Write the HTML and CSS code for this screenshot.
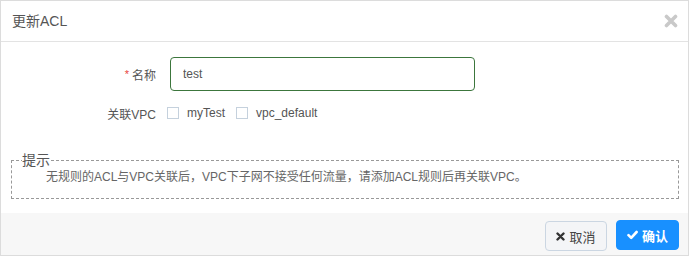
FILE: index.html
```html
<!DOCTYPE html>
<html lang="zh-CN">
<head>
<meta charset="utf-8">
<title>更新ACL</title>
<link rel="stylesheet" href="styles.css">
</head>
<body>
<div class="modal">
  <div class="modal-header">
    <span class="modal-title">更新ACL</span>
    <span class="close" aria-label="close">
      <svg width="14" height="14" viewBox="0 0 14 14"><path d="M2.5 2.5 L11.5 11.5 M11.5 2.5 L2.5 11.5" stroke="#c9c9c9" stroke-width="3.6" stroke-linecap="round" fill="none"/></svg>
    </span>
  </div>
  <div class="modal-body">
    <div class="form-row">
      <label class="form-label"><span class="req">*</span>名称</label>
      <input class="form-input" type="text" value="test">
    </div>
    <div class="form-row form-row-check">
      <label class="form-label">关联VPC</label>
      <div class="check-group">
        <span class="check-item"><span class="check-box"></span><span class="check-text">myTest</span></span>
        <span class="check-item"><span class="check-box"></span><span class="check-text">vpc_default</span></span>
      </div>
    </div>
    <fieldset class="hint">
      <legend class="hint-legend">提示</legend>
      <p class="hint-text">无规则的ACL与VPC关联后，VPC下子网不接受任何流量，请添加ACL规则后再关联VPC。</p>
    </fieldset>
  </div>
  <div class="modal-footer">
    <button class="btn btn-cancel" type="button">
      <svg width="9" height="9" viewBox="0 0 9 9"><path d="M1.5 1.5 L7.5 7.5 M7.5 1.5 L1.5 7.5" stroke="#333" stroke-width="2.4" stroke-linecap="round" fill="none"/></svg>
      取消
    </button>
    <button class="btn btn-ok" type="button">
      <svg width="11" height="10" viewBox="0 0 11 10"><path d="M1.5 5.2 L4.2 7.9 L9.6 2" stroke="#fff" stroke-width="2.6" stroke-linecap="round" stroke-linejoin="round" fill="none"/></svg>
      确认
    </button>
  </div>
</div>
</body>
</html>
```

FILE: styles.css
```css
html, body {
  margin: 0;
  padding: 0;
  background: #fff;
}

body {
  font-family: "Liberation Sans", "Noto Sans CJK SC", sans-serif;
  color: #555;
}

.modal {
  box-sizing: border-box;
  width: 689px;
  height: 256px;
  border: 1px solid #dcdcdc;
  display: flex;
  flex-direction: column;
  background: #fff;
}

.modal-header {
  border-bottom: 1px solid #e3e3e3;
  display: flex;
  align-items: center;
  justify-content: space-between;
  padding: 0 10px 2px 11px;
  box-sizing: content-box;
  height: 38px;
}

.modal-title {
  font-size: 14px;
  color: #555;
}

.close {
  display: flex;
  width: 14px;
  height: 14px;
  margin-top: 2px;
}

.modal-body {
  flex: 1;
  padding: 15px 9px 0 10px;
}

.form-row {
  display: flex;
  align-items: center;
  height: 34px;
}

.form-row-check {
  height: 20px;
  margin-top: 12px;
}

.form-label {
  width: 145px;
  margin-right: 14px;
  text-align: right;
  font-size: 12px;
  color: #555;
}

.req {
  color: #e8453c;
  font-size: 11px;
  margin-right: 3px;
  position: relative;
  top: -2px;
}

.form-input {
  box-sizing: border-box;
  width: 305px;
  height: 34px;
  border: 1px solid #3c763d;
  border-radius: 4px;
  padding: 0 12px;
  font-family: "Liberation Sans", "Noto Sans CJK SC", sans-serif;
  font-size: 12px;
  color: #555;
  outline: none;
}

.check-group {
  display: flex;
  align-items: center;
  margin-left: -3px;
}

.check-item {
  display: flex;
  align-items: center;
  margin-right: 11px;
}

.check-box {
  box-sizing: border-box;
  width: 12px;
  height: 12px;
  border: 1px solid #c5d1dd;
  background: #fff;
  margin-right: 8px;
}

.check-text {
  font-size: 12px;
  color: #555;
}

.hint {
  margin: 30px 0 0 0;
  padding: 0 10px 13px 34px;
  border: 1px dashed #999;
}

.hint-legend {
  margin-left: -24px;
  padding: 0;
  font-size: 14px;
  line-height: 14px;
  color: #555;
}

.hint-text {
  margin: 2px 0 0 0;
  font-size: 12px;
  line-height: 16px;
  color: #666;
}

.modal-footer {
  height: 42px;
  box-sizing: border-box;
  background: #f7f7f7;
  display: flex;
  justify-content: flex-end;
  align-items: flex-start;
  gap: 9px;
  padding: 7px 9px 0 0;
}

.btn {
  box-sizing: border-box;
  height: 30px;
  border-radius: 4px;
  font-family: "Liberation Sans", "Noto Sans CJK SC", sans-serif;
  font-size: 13px;
  display: flex;
  align-items: center;
  justify-content: center;
  gap: 4px;
  padding: 0;
  cursor: pointer;
}

.btn-cancel {
  width: 62px;
  margin-top: 1px;
  background: #f4f5f7;
  border: 1px solid #cbd6e2;
  color: #444;
}

.btn-ok {
  width: 63px;
  background: #1890ff;
  border: 1px solid #1890ff;
  color: #fff;
  font-weight: bold;
}
```
